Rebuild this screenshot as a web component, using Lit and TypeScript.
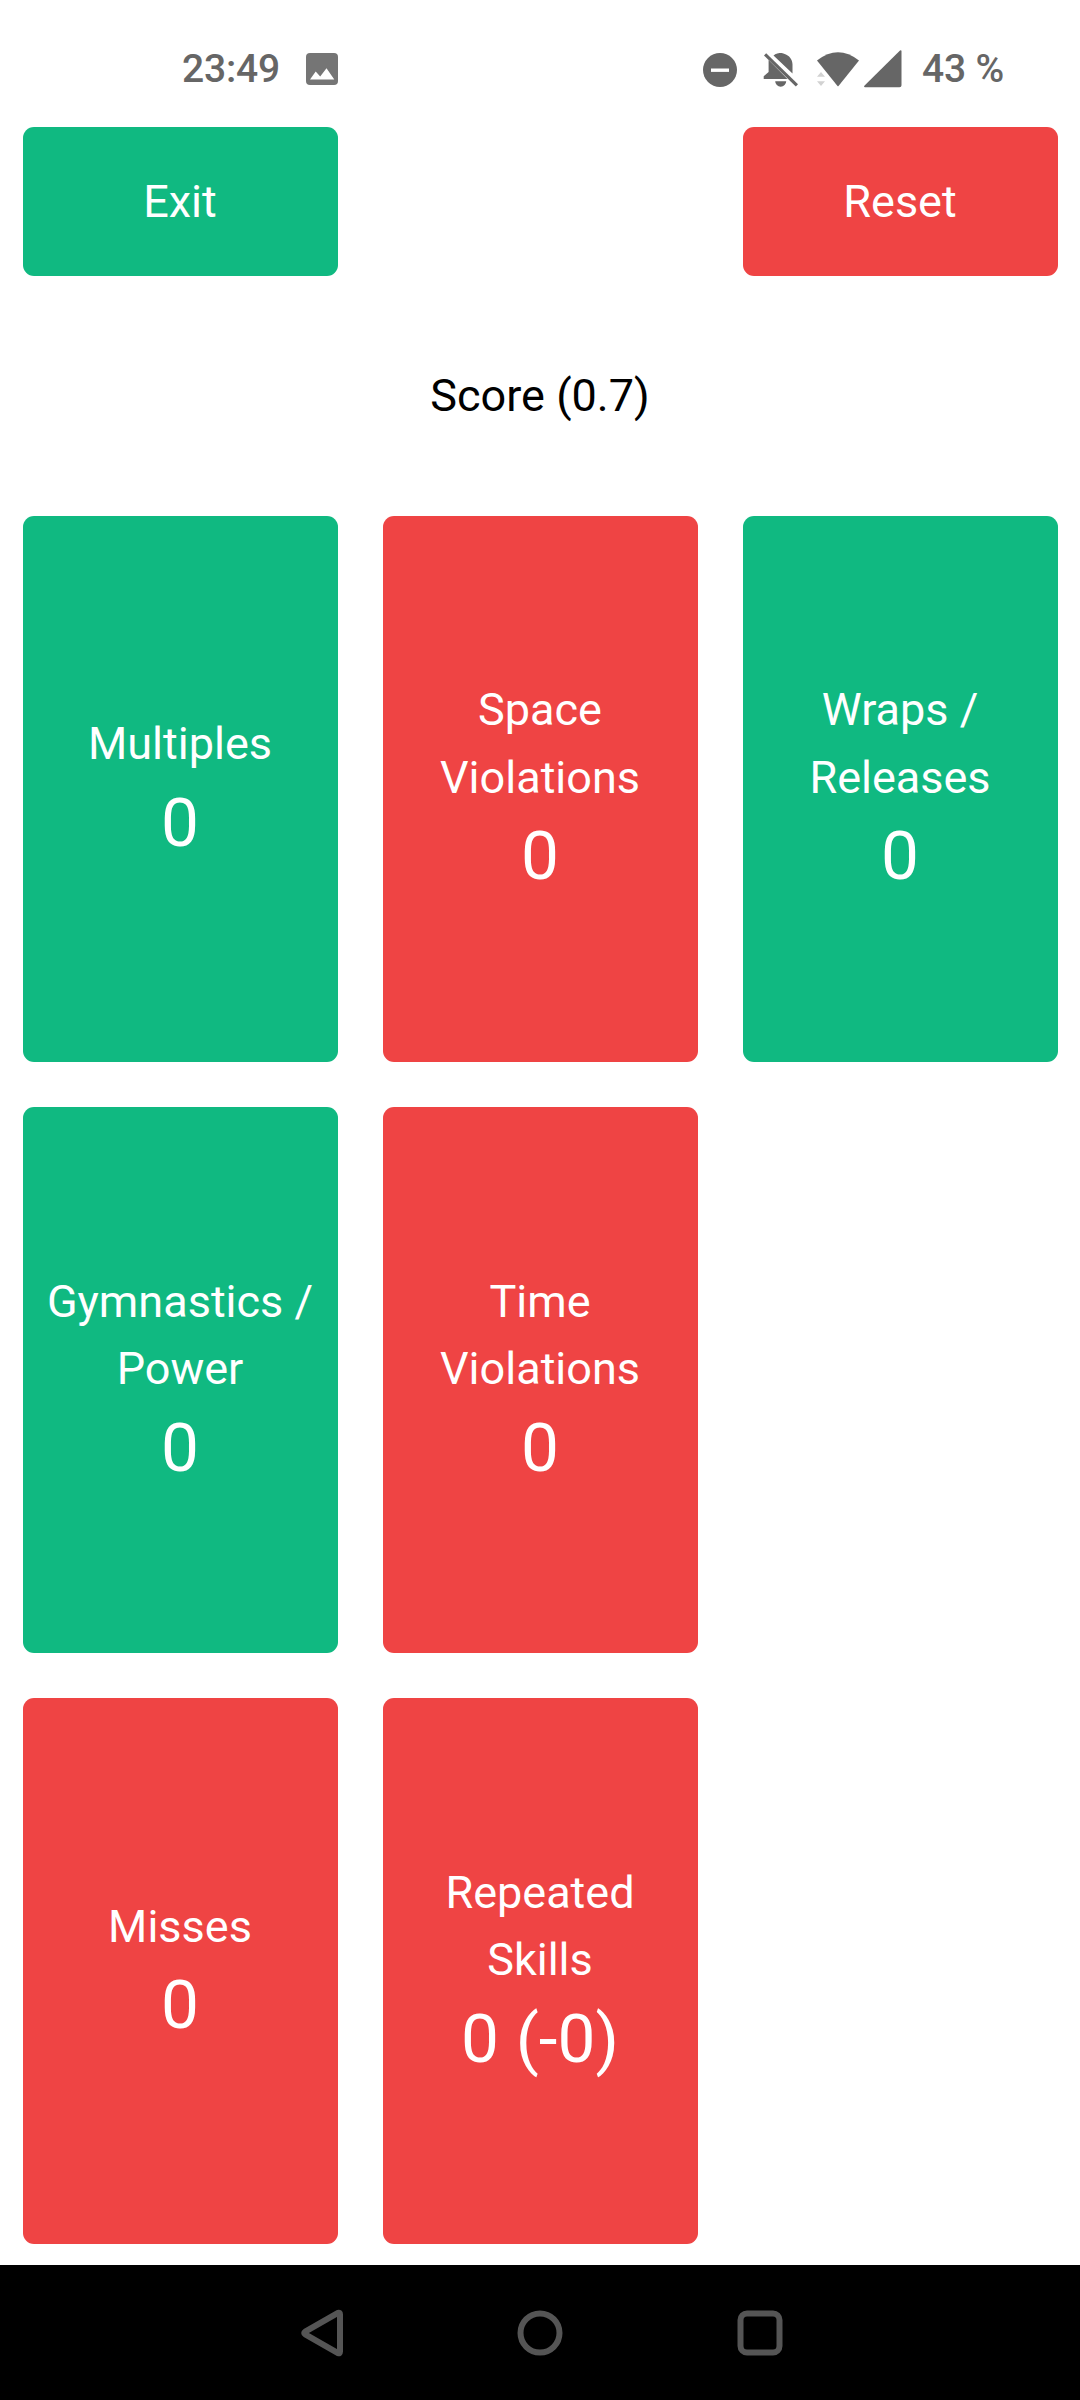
import { LitElement, html, css, svg } from "lit";
import { customElement, property } from "lit/decorators.js";
import { classMap } from "lit/directives/class-map.js";

interface Counter {
  label: string;
  value: string;
  tone: "good" | "bad";
}

// Listed in reading order; null leaves a grid cell empty.
const COUNTERS: (Counter | null)[] = [
  { label: "Multiples", value: "0", tone: "good" },
  { label: "Space Violations", value: "0", tone: "bad" },
  { label: "Wraps / Releases", value: "0", tone: "good" },
  { label: "Gymnastics / Power", value: "0", tone: "good" },
  { label: "Time Violations", value: "0", tone: "bad" },
  null,
  { label: "Misses", value: "0", tone: "bad" },
  { label: "Repeated Skills", value: "0 (-0)", tone: "bad" },
  null,
];

@customElement("status-bar")
export class StatusBar extends LitElement {
  static styles = css`
    :host {
      display: flex;
      justify-content: space-between;
      align-items: flex-start;
      box-sizing: border-box;
      height: 127px;
      padding: 46px 76px 0 182px;
      color: #666;
      font: 500 39px/46px Roboto, sans-serif;
      letter-spacing: -0.2px;
    }
    .side {
      display: flex;
      height: 48px;
      white-space: pre;
    }
    svg {
      display: block;
      flex: none;
      fill: currentColor;
    }
    .clock {
      width: 98px;
    }
    .photo {
      margin-left: 26px;
      color: #757575;
    }
    .bell {
      margin-left: 24.5px;
    }
    .wifi {
      margin-left: 17.5px;
    }
    .signal {
      margin-left: 4px;
    }
    .battery {
      width: 82px;
      margin-left: 20px;
    }
    .cut {
      fill: #fff;
    }
    .faint {
      fill: #d2d2d2;
    }
  `;

  render() {
    return html`
      <div class="side">
        <span class="clock">23:49</span>
        <svg class="photo" width="32" height="48" viewBox="0 0 32 48">
          <rect y="7" width="32" height="32" rx="4" />
          <path class="cut" d="M4 33.5 9.7 25.6 14.2 30.4 20.5 22.3 28.3 33.5Z" />
        </svg>
      </div>
      <div class="side">
        <svg width="36" height="48" viewBox="0 0 36 48">
          <circle cx="18" cy="24" r="17" />
          <path class="cut" d="M9 22.5h18v3.4H9z" />
        </svg>
        <svg class="bell" width="36" height="48" viewBox="0 0 36 48">
          <path
            d="M10.5 9.5C12 8.3 13.5 7.8 14.5 7.6 15 6.8 20 6.8 21 7.8 26.5 9.3 29.5 14 29.5 18.5V27.5ZM5.6 14 24.5 33H.7V30.300L5.600 26Z"
          />
          <path d="M1 9.500 3.200 7.300 35 38.200 32.800 40.400Z" />
          <path d="M12.200 35.200h11a5.500 5.500 0 0 1-11 0z" />
        </svg>
        <svg class="wifi" width="44" height="48" viewBox="0 0 44 48">
          <path d="M1 14.500Q22 -2 43 14.500L22.500 40Q22 40.500 21.500 40Z" />
          <path class="faint" d="M1 30.700 5 26 9 30.700ZM1 35.300H9L5 40Z" />
        </svg>
        <svg class="signal" width="38" height="48" viewBox="0 0 38 48">
          <path d="M1 41.300Q-.6 41 .6 39.600L36 4.600Q37.500 3.600 37.500 5.600V39.300Q37.500 41.300 35.500 41.300Z" />
        </svg>
        <span class="battery">43 %</span>
      </div>
    `;
  }
}

@customElement("counter-tile")
export class CounterTile extends LitElement {
  @property() label = "";
  @property() value = "";
  @property() tone: "good" | "bad" = "good";

  static styles = css`
    :host {
      display: block;
    }
    .tile {
      box-sizing: border-box;
      display: flex;
      flex-direction: column;
      align-items: center;
      justify-content: center;
      width: 100%;
      height: 100%;
      padding: 0.5px 22px 0;
      border: 0;
      border-radius: 11px;
      color: #fff;
      font: 400 45px/67.5px Roboto, sans-serif;
      text-align: center;
    }
    .good {
      background: #10b981;
    }
    .bad {
      background: #ef4444;
    }
    .value {
      font-size: 67.5px;
      line-height: 90px;
    }
  `;

  render() {
    return html`
      <button class=${classMap({ tile: true, [this.tone]: true })}>
        <span>${this.label}</span>
        ${this.value ? html`<span class="value">${this.value}</span>` : null}
      </button>
    `;
  }
}

@customElement("nav-bar")
export class NavBar extends LitElement {
  static styles = css`
    :host {
      display: flex;
      justify-content: center;
      align-items: center;
      gap: 172px;
      box-sizing: border-box;
      height: 135px;
      background: #000;
    }
    svg {
      display: block;
      fill: none;
      stroke: #555;
      stroke-width: 6;
      stroke-linejoin: round;
    }
  `;

  private icon(shape: unknown) {
    return html`<svg width="48" height="48" viewBox="0 0 48 48">${shape}</svg>`;
  }

  render() {
    return html`
      ${this.icon(svg`<path d="M9.200 22.600 42 3.800Q44 3.200 44 5.400V42.600Q44 44.800 42 44.200L9.200 25.400Q7.200 24 9.200 22.600Z" />`)}
      ${this.icon(svg`<circle cx="24" cy="24" r="19.500" />`)}
      ${this.icon(svg`<rect x="4.500" y="4.500" width="39" height="39" rx="6.500" />`)}
    `;
  }
}

@customElement("app-root")
export class AppRoot extends LitElement {
  static styles = css`
    :host {
      display: flex;
      flex-direction: column;
      width: 1080px;
      height: 2400px;
      overflow: hidden;
      background: #fff;
      color: #000;
      font: 400 45px/67.5px Roboto, sans-serif;
    }
    .grid {
      flex: 1;
      display: grid;
      grid-template-columns: repeat(3, 315px);
      grid-template-rows: 149px 239.5px auto;
      align-content: start;
      column-gap: 45px;
      padding: 0 22.5px;
    }
    .reset {
      grid-column: 3;
    }
    .score {
      grid-column: 1 / -1;
      align-self: center;
      text-align: center;
    }
    .counters {
      grid-column: 1 / -1;
      display: grid;
      grid-template-columns: repeat(3, 315px);
      grid-auto-rows: 546.25px;
      gap: 45px;
    }
  `;

  render() {
    return html`
      <status-bar></status-bar>
      <main class="grid">
        <counter-tile label="Exit" tone="good"></counter-tile>
        <counter-tile class="reset" label="Reset" tone="bad"></counter-tile>
        <div class="score">Score (0.7)</div>
        <div class="counters">
          ${COUNTERS.map((c) =>
            c
              ? html`<counter-tile .label=${c.label} .value=${c.value} .tone=${c.tone}></counter-tile>`
              : html`<div></div>`,
          )}
        </div>
      </main>
      <nav-bar></nav-bar>
    `;
  }
}
